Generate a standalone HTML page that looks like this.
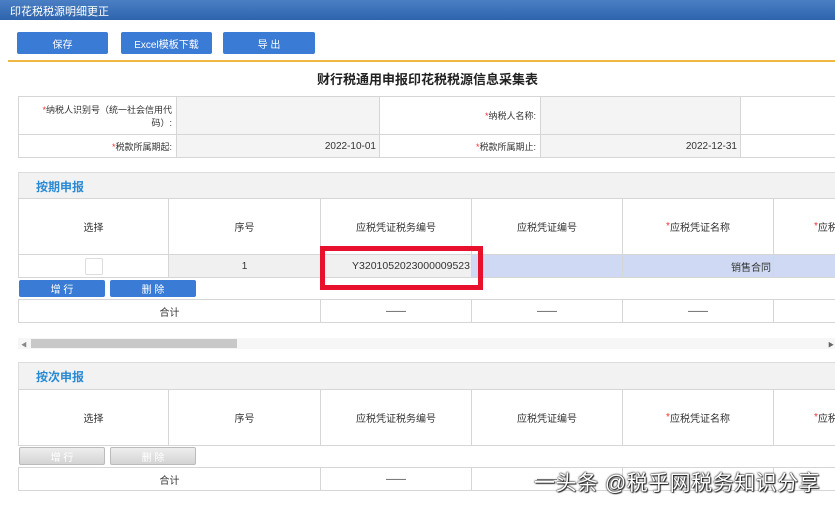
<!DOCTYPE html>
<html><head><meta charset="utf-8"><style>
*{margin:0;padding:0;box-sizing:border-box}
body{width:835px;height:506px;overflow:hidden;background:#fff;position:relative;font-family:"Liberation Sans","Noto Sans CJK SC",sans-serif;font-size:10px;color:#333}
.a{position:absolute}
.top{left:0;top:0;width:835px;height:20px;background:linear-gradient(#4a7fc4,#2e64ad);color:#fff;font-size:11px;padding:3px 0 0 10px}
.btn{background:#3a7bd5;color:#fff;border-radius:2px;display:flex;align-items:center;justify-content:center;font-size:10px}
.c{border:1px solid #d6d6d6;display:flex;align-items:center;justify-content:center}
.r{color:#e33}
.sec{background:#f2f2f2;border:1px solid #ddd;color:#2a8ad4;font-size:12px;font-weight:bold;padding:5px 0 0 17px}
.gbtn{background:linear-gradient(#eee,#d4d4d4);border:1px solid #bbb;color:#fff;border-radius:2px;display:flex;align-items:center;justify-content:center}
</style></head><body>
<div class="a top">印花税税源明细更正</div>
<div class="a btn" style="left:17px;top:32px;width:91px;height:22px">保存</div>
<div class="a btn" style="left:121px;top:32px;width:91px;height:22px">Excel模板下载</div>
<div class="a btn" style="left:223px;top:32px;width:92px;height:22px">导 出</div>
<div class="a" style="left:8px;top:60px;width:827px;height:2px;background:#f0b840"></div>
<div class="a" style="left:0;top:69px;width:855px;text-align:center;font-size:13px;font-weight:bold;color:#222">财行税通用申报印花税税源信息采集表</div>

<div class="a c" style="left:18px;top:96px;width:159px;height:39px;justify-content:flex-end;text-align:right;padding-right:4px;font-size:9px"><span><span class="r">*</span>纳税人识别号（统一社会信用代<br>码）:</span></div>
<div class="a c" style="left:176px;top:96px;width:204px;height:39px;background:#f4f4f4"></div>
<div class="a c" style="left:379px;top:96px;width:162px;height:39px;justify-content:flex-end;padding-right:4px;font-size:9px"><span><span class="r">*</span>纳税人名称:</span></div>
<div class="a c" style="left:540px;top:96px;width:201px;height:39px;background:#f4f4f4"></div>
<div class="a c" style="left:740px;top:96px;width:100px;height:39px"></div>
<div class="a c" style="left:18px;top:134px;width:159px;height:24px;justify-content:flex-end;padding-right:4px;font-size:9px"><span><span class="r">*</span>税款所属期起:</span></div>
<div class="a c" style="left:176px;top:134px;width:204px;height:24px;background:#f4f4f4;justify-content:flex-end;padding-right:3px">2022-10-01</div>
<div class="a c" style="left:379px;top:134px;width:162px;height:24px;justify-content:flex-end;padding-right:4px;font-size:9px"><span><span class="r">*</span>税款所属期止:</span></div>
<div class="a c" style="left:540px;top:134px;width:201px;height:24px;background:#f4f4f4;justify-content:flex-end;padding-right:3px">2022-12-31</div>
<div class="a c" style="left:740px;top:134px;width:100px;height:24px"></div>

<div class="a sec" style="left:18px;top:172px;width:820px;height:27px">按期申报</div>
<div class="a c" style="left:18px;top:198px;width:151px;height:57px">选择</div>
<div class="a c" style="left:168px;top:198px;width:153px;height:57px">序号</div>
<div class="a c" style="left:320px;top:198px;width:152px;height:57px">应税凭证税务编号</div>
<div class="a c" style="left:471px;top:198px;width:152px;height:57px">应税凭证编号</div>
<div class="a c" style="left:622px;top:198px;width:152px;height:57px"><span class="r">*</span>应税凭证名称</div>
<div class="a c" style="left:773px;top:198px;width:70px;height:57px;justify-content:flex-start;padding-left:40px"><span class="r">*</span>应税</div>
<div class="a c" style="left:18px;top:254px;width:151px;height:24px"><div style="width:18px;height:17px;border:1px solid #ddd;border-radius:2px"></div></div>
<div class="a c" style="left:168px;top:254px;width:153px;height:24px;background:#f0f0f0">1</div>
<div class="a c" style="left:320px;top:254px;width:152px;height:24px;background:#f0f0f0;justify-content:flex-end;padding-right:1px;font-size:10.5px">Y3201052023000009523</div>
<div class="a c" style="left:471px;top:254px;width:152px;height:24px;background:#cfd9f3"></div>
<div class="a c" style="left:622px;top:254px;width:152px;height:24px;background:#cfd9f3;justify-content:flex-end;padding-right:2px">销售合同</div>
<div class="a c" style="left:773px;top:254px;width:70px;height:24px;background:#cfd9f3"></div>
<div class="a" style="left:320px;top:246px;width:163px;height:44px;border:5px solid #e8112d"></div>
<div class="a btn" style="left:19px;top:280px;width:86px;height:17px">增 行</div>
<div class="a btn" style="left:110px;top:280px;width:86px;height:17px">删 除</div>
<div class="a c" style="left:18px;top:299px;width:303px;height:24px">合计</div>
<div class="a c" style="left:320px;top:299px;width:152px;height:24px">——</div>
<div class="a c" style="left:471px;top:299px;width:152px;height:24px">——</div>
<div class="a c" style="left:622px;top:299px;width:152px;height:24px">——</div>
<div class="a c" style="left:773px;top:299px;width:70px;height:24px"></div>
<div class="a" style="left:18px;top:338px;width:817px;height:11px;background:#f6f6f6"></div>
<div class="a" style="left:31px;top:339px;width:206px;height:9px;background:#c8c8c8"></div>
<div class="a" style="left:21px;top:340px;font-size:6px;color:#888">◀</div>
<div class="a" style="left:828px;top:340px;font-size:6px;color:#666">▶</div>

<div class="a sec" style="left:18px;top:362px;width:820px;height:28px">按次申报</div>
<div class="a c" style="left:18px;top:389px;width:151px;height:57px">选择</div>
<div class="a c" style="left:168px;top:389px;width:153px;height:57px">序号</div>
<div class="a c" style="left:320px;top:389px;width:152px;height:57px">应税凭证税务编号</div>
<div class="a c" style="left:471px;top:389px;width:152px;height:57px">应税凭证编号</div>
<div class="a c" style="left:622px;top:389px;width:152px;height:57px"><span class="r">*</span>应税凭证名称</div>
<div class="a c" style="left:773px;top:389px;width:70px;height:57px;justify-content:flex-start;padding-left:40px"><span class="r">*</span>应税</div>
<div class="a gbtn" style="left:19px;top:447px;width:86px;height:18px">增 行</div>
<div class="a gbtn" style="left:110px;top:447px;width:86px;height:18px">删 除</div>
<div class="a c" style="left:18px;top:467px;width:303px;height:24px">合计</div>
<div class="a c" style="left:320px;top:467px;width:152px;height:24px">——</div>
<div class="a c" style="left:471px;top:467px;width:152px;height:24px">——</div>
<div class="a c" style="left:622px;top:467px;width:152px;height:24px"></div>
<div class="a c" style="left:773px;top:467px;width:70px;height:24px"></div>
<div class="a" style="left:534px;top:467px;font-size:21px;letter-spacing:0.5px;color:#fff;text-shadow:0 0 2px #000,0 0 1px #000,1px 1px 1px #333">一头条 @税乎网税务知识分享</div>
</body></html>
